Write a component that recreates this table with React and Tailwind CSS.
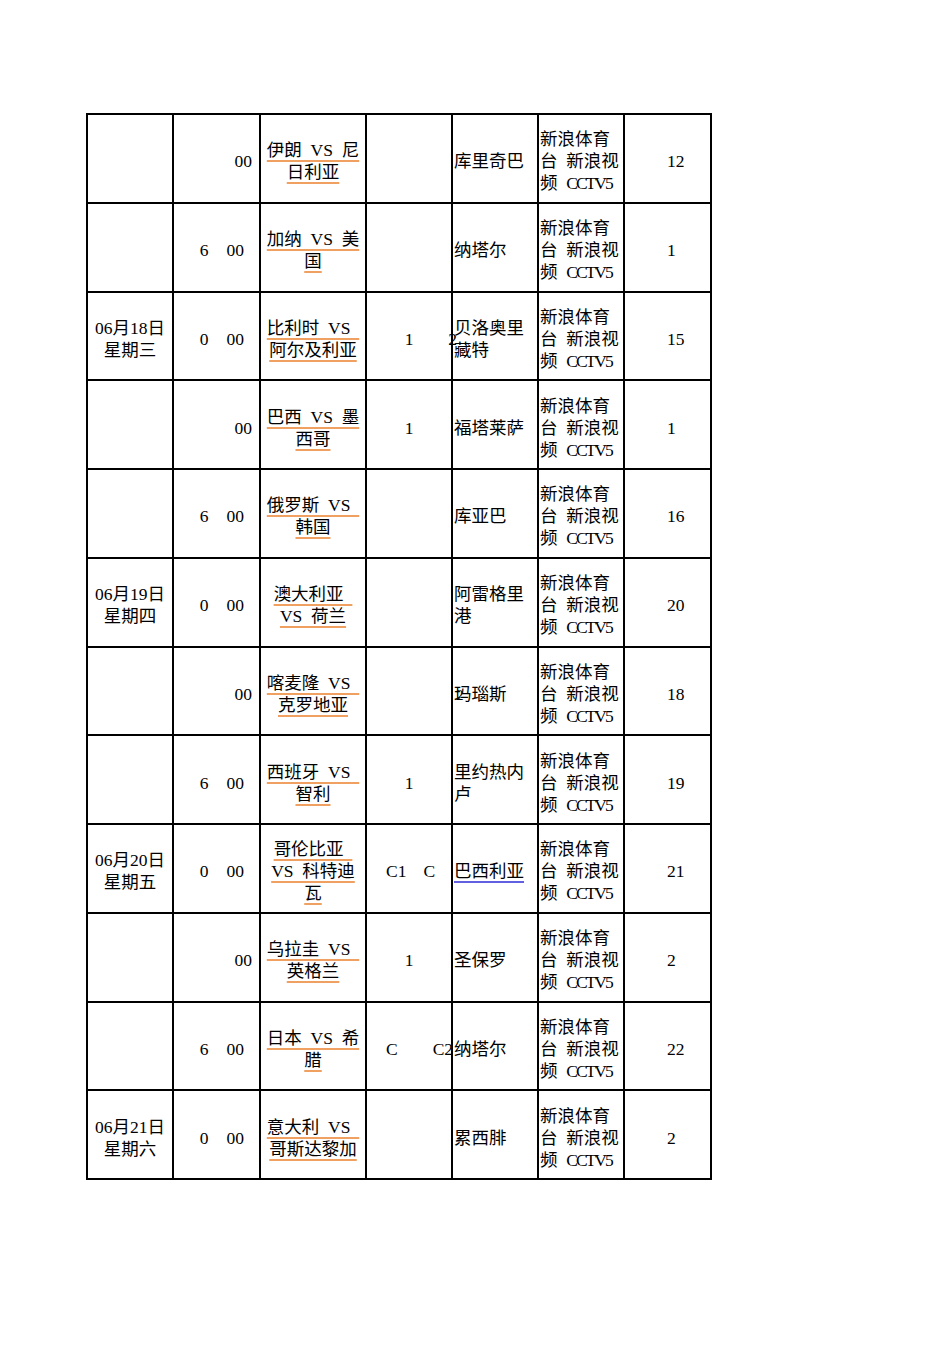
import React from 'react';

// half-width space, like the sheet's font
const S = '\u2002';

// ===== Schedule rows =====
const rows = [
  { date: null, time: ['', '00'], team: [`伊朗${S}VS${S}尼`, '日利亚'], grp: null, venue: ['库里奇巴'], no: '12' },
  { date: null, time: ['6', '00'], team: [`加纳${S}VS${S}美`, '国'], grp: null, venue: ['纳塔尔'], no: '1' },
  { date: ['06月18日', '星期三'], time: ['0', '00'], team: [`比利时${S}VS${S}`, '阿尔及利亚'], grp: 'one', venue: ['贝洛奥里', '藏特'], no: '15', mark: 'edge' },
  { date: null, time: ['', '00'], team: [`巴西${S}VS${S}墨`, '西哥'], grp: 'one', venue: ['福塔莱萨'], no: '1' },
  { date: null, time: ['6', '00'], team: [`俄罗斯${S}VS${S}`, '韩国'], grp: null, venue: ['库亚巴'], no: '16' },
  { date: ['06月19日', '星期四'], time: ['0', '00'], team: [`澳大利亚${S}`, `VS${S}荷兰`], grp: null, venue: ['阿雷格里', '港'], no: '20' },
  { date: null, time: ['', '00'], team: [`喀麦隆${S}VS${S}`, '克罗地亚'], grp: null, venue: ['玛瑙斯'], no: '18', mark: 'in' },
  { date: null, time: ['6', '00'], team: [`西班牙${S}VS${S}`, '智利'], grp: 'one', venue: ['里约热内', '卢'], no: '19' },
  { date: ['06月20日', '星期五'], time: ['0', '00'], team: [`哥伦比亚${S}`, `VS${S}科特迪`, '瓦'], grp: 'c1', venue: ['巴西利亚'], link: true, no: '21' },
  { date: null, time: ['', '00'], team: [`乌拉圭${S}VS${S}`, '英格兰'], grp: 'one', venue: ['圣保罗'], no: '2' },
  { date: null, time: ['6', '00'], team: [`日本${S}VS${S}希`, '腊'], grp: 'c2', venue: ['纳塔尔'], no: '22' },
  { date: ['06月21日', '星期六'], time: ['0', '00'], team: [`意大利${S}VS${S}`, '哥斯达黎加'], grp: null, venue: ['累西腓'], no: '2' },
];

const cell = 'h-[88.75px] pt-[6px] border-r-2 border-b-2 border-black relative flex items-center';

const Group = ({ g }) => {
  if (g === 'one') return <span className="w-full text-center">1</span>;
  if (g === 'c1')
    return (
      <span className="pl-[19px] whitespace-pre">C1<span className="ml-[17px]">C</span></span>
    );
  if (g === 'c2')
    return (
      <span className="pl-[19px] whitespace-pre">C<span className="ml-[35px]">C2</span></span>
    );
  return null;
};

export default function App() {
  return (
    <div
      className="w-[950px] min-h-[1345px] bg-white text-black text-[17.5px] leading-[22px] pt-[113px] pl-[86px]"
      style={{ fontFamily: '"Liberation Serif", "Noto Sans CJK SC", serif' }}
    >
      <div className="w-[626px] border-l-2 border-t-2 border-black grid grid-cols-[86px_87px_106px_86px_86px_86px_87px]">
        {rows.map((r, i) => (
          <React.Fragment key={i}>
            {/* date */}
            <div className={`${cell} justify-center text-center`}>
              {r.date ? (
                <div>
                  <div>{r.date[0]}</div>
                  <div>{r.date[1]}</div>
                </div>
              ) : null}
            </div>

            {/* time */}
            <div className={`${cell} justify-end ${r.time[0] ? 'pr-[15px]' : 'pr-[7px]'}`}>
              {r.time[0] ? <span className="mr-[18px]">{r.time[0]}</span> : null}
              <span>{r.time[1]}</span>
            </div>

            {/* teams */}
            <div className={`${cell} justify-center`}>
              <div className="flex flex-col items-center">
                {r.team.map((t, j) => (
                  <span
                    key={j}
                    className="whitespace-pre underline decoration-[#f0a060] decoration-[length:1.5px] underline-offset-[4px]"
                  >
                    {t}
                  </span>
                ))}
              </div>
            </div>

            {/* group */}
            <div className={cell}>
              <Group g={r.grp} />
              {r.mark === 'edge' ? (
                <span className="absolute right-[-6px] top-[35px]">2</span>
              ) : null}
            </div>

            {/* venue */}
            <div className={`${cell} pl-[1px]`}>
              <div>
                {r.venue.map((v, j) => (
                  <div
                    key={j}
                    className={r.link ? 'underline decoration-[#6060e0] decoration-[length:1.5px] underline-offset-[4px]' : ''}
                  >
                    {v}
                  </div>
                ))}
              </div>
              {r.mark === 'in' ? (
                <span className="absolute left-[3px] top-[36px] text-[15px]">2</span>
              ) : null}
            </div>

            {/* broadcast */}
            <div className={`${cell} pl-[1px]`}>
              <div>
                <div>新浪体育</div>
                <div className="whitespace-pre">{`台${S}新浪视`}</div>
                <div className="whitespace-pre">
                  {`频${S}`}
                  <span className="tracking-[-2px]">CCTV5</span>
                </div>
              </div>
            </div>

            {/* match no */}
            <div className={`${cell} pl-[42px]`}>
              <span>{r.no}</span>
            </div>
          </React.Fragment>
        ))}
      </div>
    </div>
  );
}
